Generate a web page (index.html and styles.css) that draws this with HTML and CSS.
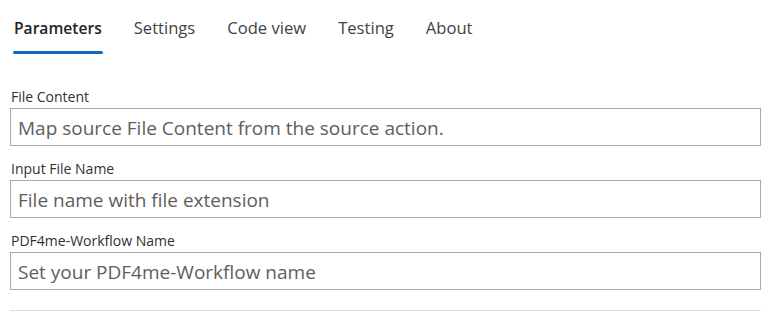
FILE: index.html
```html
<!DOCTYPE html>
<html lang="en">
<head>
    <meta charset="UTF-8">
    <meta name="viewport" content="width=device-width, initial-scale=1.0">
    <title>PDF4me Workflow - Parameters</title>
    <link rel="stylesheet" href="styles.css">
</head>
<body>
    <div class="panel">
        <div class="tabs">
            <div class="tab active">Parameters</div>
            <div class="tab">Settings</div>
            <div class="tab">Code view</div>
            <div class="tab">Testing</div>
            <div class="tab">About</div>
        </div>

        <div class="params">
            <div class="field">
                <label for="fileContent">File Content</label>
                <input type="text" id="fileContent" placeholder="Map source File Content from the source action.">
            </div>
            <div class="field">
                <label for="fileName">Input File Name</label>
                <input type="text" id="fileName" placeholder="File name with file extension">
            </div>
            <div class="field last">
                <label for="workflowName">PDF4me-Workflow Name</label>
                <input type="text" id="workflowName" placeholder="Set your PDF4me-Workflow name">
            </div>
            <div class="divider"></div>
        </div>
    </div>
</body>
</html>
```

FILE: styles.css
```css
body, html {
    margin: 0;
    padding: 0;
    background: #ffffff;
    font-family: "Open Sans", "Noto Sans", sans-serif;
    color: #323130;
}
.panel {
    width: 776px;
}
.tabs {
    display: flex;
    gap: 30px;
    padding: 14px 0 0 13px;
    height: 40px;
}
.tab {
    position: relative;
    font-size: 16.6px;
    line-height: 28px;
    padding: 0 1px;
    color: #424242;
    cursor: pointer;
}
.tab.active {
    font-size: 15.6px;
    font-weight: 600;
    color: #242424;
}
.tab.active::after {
    content: "";
    position: absolute;
    left: 0;
    right: 0;
    top: 37px;
    height: 3px;
    border-radius: 2px;
    background: #0f6cbd;
}
.params {
    padding: 33px 15px 0 10px;
}
.field {
    margin-bottom: 13px;
}
.field.last {
    margin-bottom: 20px;
}
.field label {
    display: block;
    font-size: 14px;
    line-height: 20px;
    margin-bottom: 1px;
    padding-left: 1px;
    color: #323130;
}
.field input {
    display: block;
    box-sizing: border-box;
    width: 100%;
    height: 38px;
    margin: 0;
    padding: 1px 7px 0;
    border: 1px solid #a8a8a8;
    border-radius: 0;
    font-family: inherit;
    font-size: 19px;
    color: #323130;
    outline: none;
}
.field input::placeholder {
    color: #605e5c;
}
.divider {
    height: 1px;
    background: #e1dfdd;
}
```
